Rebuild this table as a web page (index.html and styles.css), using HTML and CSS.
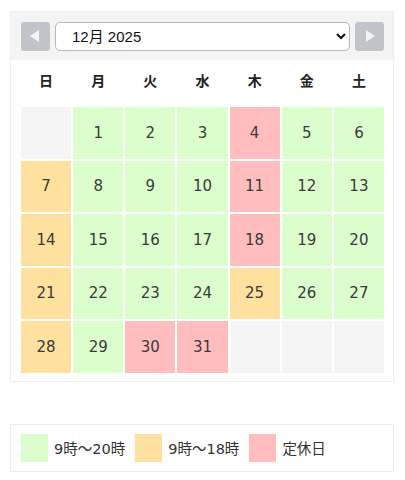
FILE: index.html
```html
<!DOCTYPE html>
<html lang="ja">
<head>
<meta charset="utf-8">
<link rel="stylesheet" href="styles.css">
</head>
<body>
<div class="cal">
  <div class="cal-head">
    <button class="nav prev" aria-label="前月"><span class="tri tri-left"></span></button>
    <select class="month">
      <option>11月 2025</option>
      <option selected>12月 2025</option>
      <option>1月 2026</option>
    </select>
    <button class="nav next" aria-label="翌月"><span class="tri tri-right"></span></button>
  </div>
  <div class="grid">
    <div class="wd">日</div><div class="wd">月</div><div class="wd">火</div><div class="wd">水</div><div class="wd">木</div><div class="wd">金</div><div class="wd">土</div>

    <div class="d empty"></div><div class="d g">1</div><div class="d g">2</div><div class="d g">3</div><div class="d r">4</div><div class="d g">5</div><div class="d g">6</div>
    <div class="d o">7</div><div class="d g">8</div><div class="d g">9</div><div class="d g">10</div><div class="d r">11</div><div class="d g">12</div><div class="d g">13</div>
    <div class="d o">14</div><div class="d g">15</div><div class="d g">16</div><div class="d g">17</div><div class="d r">18</div><div class="d g">19</div><div class="d g">20</div>
    <div class="d o">21</div><div class="d g">22</div><div class="d g">23</div><div class="d g">24</div><div class="d o">25</div><div class="d g">26</div><div class="d g">27</div>
    <div class="d o">28</div><div class="d g">29</div><div class="d r">30</div><div class="d r">31</div><div class="d empty"></div><div class="d empty"></div><div class="d empty"></div>
  </div>
</div>

<div class="legend">
  <span class="sw g"></span><span class="lbl">9時～20時</span>
  <span class="sw o"></span><span class="lbl">9時～18時</span>
  <span class="sw r"></span><span class="lbl">定休日</span>
</div>
</body>
</html>
```
FILE: styles.css
```css
* { box-sizing: border-box; }
body {
  margin: 0;
  padding: 11px 11px 0 10px;
  font-family: "DejaVu Sans", "Noto Sans CJK JP", sans-serif;
  color: #333;
  background: #fff;
}
.cal {
  border: 1px solid #eee;
  width: 384px;
}
.cal-head {
  background: #f4f4f4;
  display: flex;
  align-items: center;
  gap: 5px;
  padding: 9px 9px 9px 10px;
  height: 48px;
}
.nav {
  width: 29px;
  height: 29px;
  flex: 0 0 29px;
  border: none;
  border-radius: 3px;
  background: #c1c5c9;
  padding: 0;
  display: flex;
  align-items: center;
  justify-content: center;
}
.tri {
  width: 0;
  height: 0;
  border-top: 6px solid transparent;
  border-bottom: 6px solid transparent;
}
.tri-left { border-right: 9px solid #f4f4f4; margin-right: 2px; }
.tri-right { border-left: 9px solid #f4f4f4; margin-left: 2px; }
.month {
  flex: 1;
  height: 29px;
  border: 1px solid #b8b8b8;
  border-radius: 5px;
  background: #fff;
  padding: 0 0 0 12px;
  font-family: "Liberation Sans", "Noto Sans CJK JP", sans-serif;
  font-size: 15px;
  color: #111;
}
.grid {
  display: grid;
  grid-template-columns: repeat(7, 1fr);
  column-gap: 2px;
  row-gap: 2px;
  padding: 0 9px 8px 10px;
}
.wd {
  height: 45px;
  padding-bottom: 5px;
  display: flex;
  align-items: center;
  justify-content: center;
  font-family: "Noto Sans CJK JP", sans-serif;
  font-weight: bold;
  font-size: 14px;
  color: #222;
}
.d {
  height: 51.5px;
  display: flex;
  align-items: center;
  justify-content: center;
  font-size: 15px;
  color: #3a3a3a;
}
.empty { background: #f5f5f5; }
.g { background: #dcfecc; }
.o { background: #fee09f; }
.r { background: #ffbebd; }
.legend {
  margin-top: 42px;
  width: 384px;
  border: 1px solid #eee;
  display: flex;
  align-items: center;
  padding: 9px 10px 9px 10px;
  height: 48px;
}
.sw {
  width: 27px;
  height: 28px;
  flex: 0 0 27px;
}
.lbl {
  margin: 0 10px 0 6px;
  font-size: 14.5px;
  color: #333;
}
```
